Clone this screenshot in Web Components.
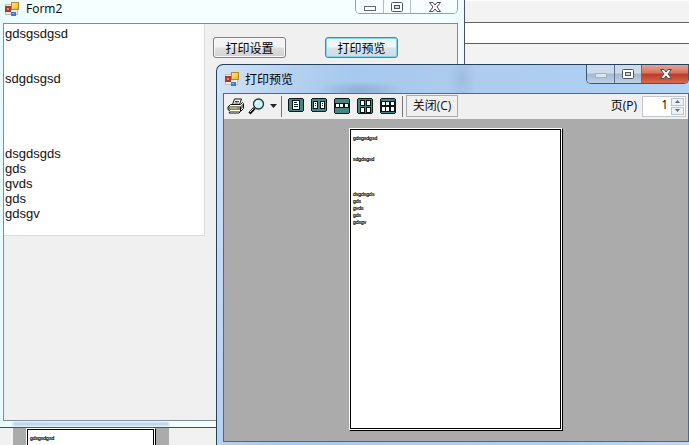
<!DOCTYPE html>
<html lang="zh">
<head>
<meta charset="utf-8">
<title>打印预览</title>
<style>
html, body { height: 100%; margin: 0; }
body { overflow: hidden; font: 12px/15px "Liberation Sans", "Noto Sans CJK SC", sans-serif; color: #000; }
</style>
</head>
<body>
<demo-desktop></demo-desktop>
<script>
const define = (name, html, setup) => customElements.define(name, class extends HTMLElement {
  constructor() {
    super();
    const t = document.createElement('template');
    t.innerHTML = html;
    this.attachShadow({ mode: 'open' }).append(t.content.cloneNode(true));
  }
  connectedCallback() { if (setup) setup(this, this.shadowRoot); }
});

define('form-icon', `
<style>:host { display: block; width: 14px; height: 14px; } svg { display: block; }</style>
<svg width="14" height="14" viewBox="0 0 14 14" aria-hidden="true">
  <defs>
    <linearGradient id="y" x2="1" y2="1"><stop stop-color="#ffe98c"/><stop offset="1" stop-color="#f0b11c"/></linearGradient>
  </defs>
  <rect x=".5" y="2.500" width="12" height="10" fill="#f3efe6" stroke="#c4bcae"/>
  <rect x="0" y="4" width="6" height="6" fill="#a5392c"/><rect x="2" y="6" width="2" height="2" fill="#e98a75"/>
  <rect x="6.500" y=".5" width="7" height="7" fill="url(#y)" stroke="#b8862a"/>
  <rect x="6" y="10" width="5" height="4" fill="#3c78d8"/><rect x="7" y="11" width="2" height="1" fill="#8db8f5"/>
</svg>`);

define('caption-buttons', `
<style>
:host { display: grid; grid-template-columns: 28px 27px 48px; height: 19px; box-sizing: border-box;
  border: 1px solid #44566b; border-top: 0; border-radius: 0 0 5px 5px; overflow: hidden; width: 103px; }
button { margin: 0; padding: 0; border: 0; border-right: 1px solid #5d7087; display: grid; place-items: center;
  background: linear-gradient(#cddcec 0 45%, #a3b7cd 50%, #bfd3e8); }
button:last-child { border: 0; background: linear-gradient(#e5a394, #d67460 45%, #b83a26 50%, #d96a4c); }
:host([plain]) { height: 14px; border-color: #96a0ab; }
:host([plain]) button { background: #f8feff; border-color: #b4bcc4; padding-bottom: 6px; }
svg { display: block; }
</style>
<button type="button" aria-label="最小化"><svg width="14" height="14"><rect x="1.500" y="6.500" width="11" height="4" fill="#fff" stroke="#5e6773"/></svg></button>
<button type="button" aria-label="最大化"><svg width="14" height="14"><rect x="1.500" y="2.500" width="11" height="9" rx="1" fill="#fff" stroke="#4b5665"/><rect x="4.500" y="5.500" width="5" height="3" fill="#cddae7" stroke="#4b5665"/></svg></button>
<button type="button" aria-label="关闭"><svg width="14" height="14"><path d="M1.500 2.500h3.500l2 2.500 2-2.500h3.500l-3.500 4.500 3.500 4.500h-3.500l-2-2.500-2 2.500h-3.500l3.500-4.500z" fill="#fff" stroke="#4f4a55"/></svg></button>
`, (host, root) => {
  if (!host.hasAttribute('plain')) {
    const r = root.querySelector('rect');
    r.setAttribute('stroke', '#a3afbd'); r.setAttribute('fill', '#dbe5ef');
  }
});

define('form-window', `
<style>
:host { display: flex; flex-direction: column; box-sizing: border-box; padding: 0 6px 6px 3px;
  border-right: 1px solid #4a535b; border-bottom: 1px solid #3d4c5f;
  background: linear-gradient(90deg, #e9fbfd, #f6ffff 12% 90%, #eefcff); }
header { display: flex; justify-content: space-between; align-items: flex-start; height: 23px; }
.title { display: flex; gap: 7px; padding: 0 0 0 2px; line-height: 17px; font-family: "Open Sans", "Noto Sans", sans-serif; }
form-icon { margin-top: 2px; }
.client { flex: 1; display: flex; align-items: flex-start; border: 1px solid #7d8f94; background: #f0f0f0; }
</style>
<header><span class="title"><form-icon></form-icon><slot name="title"></slot></span><caption-buttons plain></caption-buttons></header>
<div class="client"><slot></slot></div>`);

define('text-box', `
<style>
:host { display: block; width: 201px; height: 212px; }
textarea { display: block; box-sizing: border-box; width: 100%; height: 100%; margin: 0; padding: 2px 1px; resize: none; outline: 0;
  border: 0; border-right: 1px solid #dcdcdc; border-bottom: 1px solid #dcdcdc; border-radius: 0; background: #fff; color: #111;
  overflow: hidden; font: 13px/15px "Liberation Sans", sans-serif; }
</style>
<textarea aria-label="文本" spellcheck="false"></textarea>`,
(host, root) => { root.querySelector('textarea').value = host.getAttribute('value'); });

define('push-button', `
<style>
:host { display: block; }
button { display: block; box-sizing: border-box; width: 73px; height: 21px; padding: 0 0 1px; border: 1px solid #808080; border-radius: 3px;
  background: linear-gradient(#f4f4f4 0 48%, #dedede 52%, #d2d2d2); box-shadow: inset 0 0 0 1px #fafafa;
  font: 12px/17px "Noto Sans CJK SC", sans-serif; color: #000; }
:host([focused]) button { border-color: #3c8fae; box-shadow: inset 0 0 0 1px #7fd5f2; background: linear-gradient(#eef6f9 0 48%, #d9e4e9 52%, #d0dce1); }
</style>
<button type="button"><slot></slot></button>`);

const pageIcon = (label, h, cells) => `<button type="button" aria-label="${label}"><svg width="16" height="${h}" shape-rendering="crispEdges">
<path d="M1 1h14v${h - 2}h-14z" fill="#478582"/><path d="M1 0h14v1h1v${h - 2}h-1v1h-14v-1h-1v-${h - 2}h1zM1 1v${h - 2}h14v-${h - 2}z" fill="#0b1b1b" fill-rule="evenodd"/>
${cells.map(([x, y, w, h]) => `<rect x="${x}" y="${y}" width="${w}" height="${h}" fill="#061414"/><rect x="${x + 1}" y="${y + 1}" width="${w - 2}" height="${h - 2}" fill="#fff"/>`).join('')}
${cells.length === 1 ? '<path d="M6 4h3v1h-3zM6 6h4v1h-4zM6 8h4v1h-4z" fill="#122"/>' : ''}
${cells.length === 2 ? '<path d="M4 5h1v1h-1zM4 7h1v1h-1zM11 5h1v1h-1zM11 7h1v1h-1z" fill="#122"/>' : ''}</svg></button>`;

define('preview-toolbar', `
<style>
:host { display: flex; align-items: center; height: 25px; box-sizing: border-box; padding: 0 2px 1px 3px; background: #f0f0f0;
  font: 12px/18px "Open Sans", "Noto Sans CJK SC", sans-serif; }
button { margin: 0; padding: 0; border: 0; background: none; color: #111; font: inherit; }
button svg { display: block; }
.zoom { display: flex; align-items: center; gap: 5px; margin: 0 4px; }
.sep { width: 1px; height: 21px; background: #777; }
.pages { display: flex; height: 16px; align-items: flex-start; gap: 7px; margin: 0 6px; }
.close { box-sizing: border-box; width: 52px; height: 22px; margin-left: 3px; border: 1px solid #aaa; line-height: 18px; }
label { margin-left: auto; padding-right: 5px; }
.num { display: flex; box-sizing: border-box; width: 44px; height: 21px; border: 1px solid #c2c7cd; background: #fff; padding: 1px; }
input { appearance: textfield; flex: 1; min-width: 0; border: 0; margin: 0; padding: 0 3px 3px 0; outline: 0; text-align: right; background: none; font: 12px/15px "Open Sans", sans-serif; }
input::-webkit-inner-spin-button { display: none; }
.spin { display: grid; width: 13px; gap: 1px; }
.spin button { display: grid; place-items: center; box-sizing: border-box; border: 1px solid #b9c3ce; background: #edf1f6; }
</style>
<button type="button" aria-label="打印"><svg width="17" height="16" viewBox="0 0 17 16">
  <path d="M5.500 6.500 7.500 1h7l-2 5.500z" fill="#fff" stroke="#111"/><path d="M8 3.500h4M7.500 5h4" stroke="#111" stroke-width=".8"/>
  <path d="M3.500 6.500h10l2-2 1 1v5l-3 3h-10l-2.500-2v-2.500z" fill="#fffef0" stroke="#111"/>
  <path d="M1 9h12.500l3-3M1 11h12.500l3-3M13.500 9v4" fill="none" stroke="#111"/><path d="M3 10h7" stroke="#d4d03a"/>
  <path d="M3 13.500 2 15h10l1.500-1.500" fill="#fff" stroke="#111"/></svg></button>
<span class="zoom"><button type="button" aria-label="缩放"><svg width="17" height="17" viewBox="0 0 17 17">
  <path d="M6.500 10 1.500 15.500" stroke="#111" stroke-width="3"/><path d="M5.500 10.500 2 14" stroke="#ddd" stroke-width="1"/>
  <circle cx="10.500" cy="6" r="5" fill="#c9f1f3" stroke="#16393b" stroke-width="1.300"/><path d="M8 6a3 3 0 0 1 3-3" fill="none" stroke="#fff" stroke-width="1.500"/></svg></button>
<button type="button" aria-label="缩放选项"><svg width="7" height="4"><path d="M0 0h7l-3.500 4z" fill="#222"/></svg></button></span>
<span class="sep"></span>
<span class="pages">
${pageIcon('一页', 14, [[4, 2, 8, 10]])}
${pageIcon('两页', 14, [[2, 3, 5, 8], [9, 3, 5, 8]])}
${pageIcon('三页', 16, [[1, 5, 5, 5], [5, 5, 5, 5], [10, 5, 5, 5]])}
${pageIcon('四页', 16, [[3, 2, 5, 6], [9, 2, 5, 6], [3, 9, 5, 6], [9, 9, 5, 6]])}
${pageIcon('六页', 16, [[1, 3, 5, 5], [5, 3, 5, 5], [10, 3, 5, 5], [1, 8, 5, 6], [5, 8, 5, 6], [10, 8, 5, 6]])}
</span>
<span class="sep"></span>
<button type="button" class="close">关闭(C)</button>
<label for="page">页(P)</label>
<span class="num"><input id="page" type="number" value="1" min="1"><span class="spin">
<button type="button" aria-label="下一页"><svg width="5" height="3"><path d="M0 3h5l-2.500-3z" fill="#5b6a85"/></svg></button>
<button type="button" aria-label="上一页"><svg width="5" height="3"><path d="M0 0h5l-2.500 3z" fill="#5b6a85"/></svg></button></span></span>`);

define('paper-sheet', `
<style>
:host { display: block; box-sizing: border-box; background: #fff; padding: 0 1px 1px 0;
  border: 1px solid #000; border-top-color: #fff; border-left-color: #fff; }
div { box-sizing: border-box; height: 100%; border: 1px solid #000; padding: 5px 2px; white-space: pre; background: #fff;
  font: 5px/7px "Liberation Sans", sans-serif; color: #000; -webkit-text-stroke: 0.2px #000; overflow: hidden; }
</style>
<div><slot></slot></div>`);

define('preview-window', `
<style>
:host { display: flex; flex-direction: column; box-sizing: border-box; padding: 0 0 3px 6px; border: 1px solid #24405c; border-width: 1px 0 0 1px;
  border-radius: 7px 0 0 0; overflow: hidden;
  background:
    radial-gradient(44px 9px at 144px 25px, #7f9dbe99, transparent) no-repeat,
    radial-gradient(14px 30px at 245px 14px, #86a9ce66, transparent) no-repeat,
    linear-gradient(100deg, #d3e4f7, #b5d1ef 14%, #a6c9ed 25%, #afcced 50%, #acd0f3 75%, #bdd9f3); }
header { display: flex; justify-content: space-between; align-items: flex-start; height: 28px; }
.title { display: flex; gap: 6px; padding: 7px 0 0 2px; line-height: 14px; font-family: "Noto Sans CJK SC", sans-serif; }
.client { flex: 1; min-height: 0; display: flex; flex-direction: column; border: 1px solid #4c6a8c; border-bottom-color: #52637a; background: #ababab; }
.canvas { flex: 1; min-height: 0; display: flex; justify-content: center; padding: 9px 0 10px; }
paper-sheet { height: 100%; aspect-ratio: 214 / 303; }
</style>
<header><span class="title"><form-icon></form-icon><slot name="title"></slot></span><caption-buttons></caption-buttons></header>
<div class="client"><preview-toolbar></preview-toolbar><div class="canvas"><paper-sheet><slot></slot></paper-sheet></div></div>`);

define('back-window', `
<style>
:host { display: block; background: #f3f3f3; border-top: 1px solid #fff; }
.line { height: 20px; margin-top: 21px; border: 1px solid #606060; border-width: 1px 0; background: #fff; }
</style>
<div class="line"></div>`);

define('lower-window', `
<style>
:host { display: block; background: #f1f1f1; overflow: hidden; }
.area { width: 156px; height: 100%; box-sizing: border-box; margin-left: 13px; padding: 1px 13px 0; background: #ababab; }
paper-sheet { height: 180px; }
</style>
<div class="area"><paper-sheet><slot></slot></paper-sheet></div>`);

define('demo-desktop', `
<style>
:host { display: block; position: relative; height: 100vh; overflow: hidden; background: #f3f3f3; }
back-window { position: absolute; inset: 0 0 auto 0; }
lower-window { position: absolute; left: 0; right: 0; bottom: 0; height: 18px; }
form-window { position: absolute; left: 0; top: 0; width: 465px; bottom: 17px; }
preview-window { position: absolute; left: 216px; top: 64px; right: 0; bottom: 0; }
.glow { position: absolute; left: 13px; bottom: 19px; width: 156px; height: 4px; background: #bdd2ef; filter: blur(1px); }
push-button { margin: 13px 0 0 8px; }
push-button[focused] { margin-left: 39px; }
</style>
<back-window></back-window>
<lower-window>gdsgsdgsd</lower-window>
<form-window><span slot="title">Form2</span>
<text-box value="gdsgsdgsd&#10;&#10;&#10;sdgdsgsd&#10;&#10;&#10;&#10;&#10;dsgdsgds&#10;gds&#10;gvds&#10;gds&#10;gdsgv"></text-box>
<push-button>打印设置</push-button><push-button focused>打印预览</push-button></form-window>
<div class="glow"></div>
<preview-window><span slot="title">打印预览</span>gdsgsdgsd


sdgdsgsd




dsgdsgds
gds
gvds
gds
gdsgv</preview-window>`);
</script>
</body>
</html>
